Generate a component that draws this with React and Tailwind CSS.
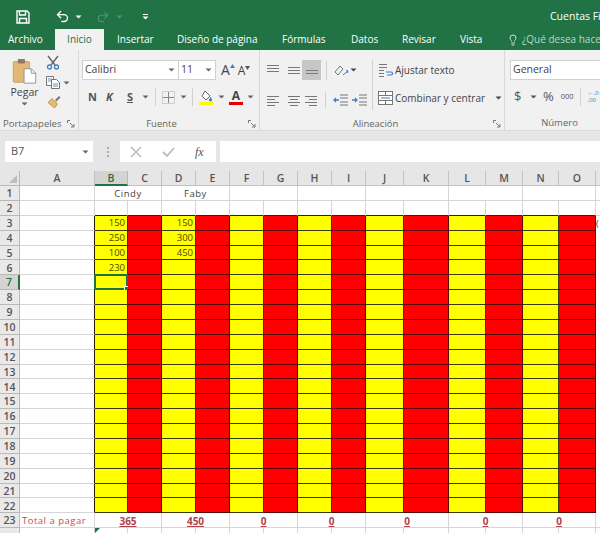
import React from 'react';
import { Undo2, Redo2, Lightbulb } from 'lucide-react';

const Caret = ({ className = 'text-[#666]' }) => (
  <svg width="7" height="4" viewBox="0 0 7 4" className={`shrink-0 ${className}`}>
    <path d="M0.5 0.5h6L3.5 3.5z" fill="currentColor" />
  </svg>
);

const Sep = ({ className = 'h-[19px]' }) => <div className={`w-px bg-[#d0d0d0] shrink-0 ${className}`} />;

const Launcher = () => (
  <svg width="8" height="8" viewBox="0 0 8 8" className="shrink-0 text-[#777]">
    <path d="M0.5 3V0.5H3M3 3l3.5 3.5M7 4v3H4" fill="none" stroke="currentColor" strokeWidth="1" />
  </svg>
);

// lines for the alignment buttons
const Lines = ({ rows }) => (
  <svg width="14" height="12" viewBox="0 0 14 12" className="shrink-0">
    {rows.map(([x1, x2, y], i) => (
      <path key={i} d={`M${x1} ${y}H${x2}`} stroke="#777" strokeWidth="1" />
    ))}
  </svg>
);

const Save = () => (
  <svg width="14" height="14" viewBox="0 0 14 14" fill="none" stroke="#fff" strokeWidth="1.4">
    <path d="M1 1h10l2 2v10H1z" />
    <path d="M3.5 1v4h6V1M3.5 13V8.5h7V13" />
  </svg>
);

const Paste = () => (
  <svg width="25" height="26" viewBox="0 0 27 29">
    <rect x="1" y="4" width="18" height="23" rx="1" fill="#e3b877" stroke="#c79a5b" />
    <rect x="6" y="1" width="8" height="5" rx="1" fill="#8a7a6a" />
    <path d="M13 12h8l5 5v11H13z" fill="#fff" stroke="#8d8d8d" />
    <path d="M21 12v5h5" fill="none" stroke="#8d8d8d" />
  </svg>
);

const Scissors = () => (
  <svg width="14" height="15" viewBox="0 0 14 15" fill="none">
    <path d="M2 1l7 9M12 1L5 10" stroke="#666" strokeWidth="1.4" />
    <circle cx="3.5" cy="12" r="2" stroke="#3f7fc1" strokeWidth="1.3" />
    <circle cx="10.5" cy="12" r="2" stroke="#3f7fc1" strokeWidth="1.3" />
  </svg>
);

const Copy = () => (
  <svg width="14" height="13" viewBox="0 0 14 13" fill="#fff" stroke="#777">
    <path d="M0.5 0.5h7v9h-7z" />
    <path d="M5.5 3.5h5l3 3v6h-8z" />
    <path d="M2 3h4M2 5h3M7 8h5M7 10h5" stroke="#6b93bd" />
  </svg>
);

const Brush = () => (
  <svg width="15" height="14" viewBox="0 0 15 14">
    <path d="M9 5l4-4 1.5 1.5-4 4z" fill="#777" />
    <path d="M6 3.5l5.5 5.5-3 4L2 7.5z" fill="#e6b96f" stroke="#c69a55" />
  </svg>
);

const BigA = ({ size, mark }) => (
  <span className="flex items-start text-[#444] leading-none">
    <span style={{ fontSize: size }}>A</span>
    <svg width="5" height="4" viewBox="0 0 5 4" className="mt-px">
      <path d={mark === 'up' ? 'M0 4l2.5-4L5 4z' : 'M0 0l2.5 4L5 0z'} fill={mark === 'up' ? '#4a7ebb' : '#555'} />
    </svg>
  </span>
);

const Borders = () => (
  <svg width="13" height="13" viewBox="0 0 13 13" fill="none" className="shrink-0">
    <rect x="0.5" y="0.5" width="12" height="12" stroke="#aaa" strokeDasharray="1 1" />
    <path d="M6.5 1v11M1 6.5h11" stroke="#888" />
  </svg>
);

const Fill = () => (
  <svg width="15" height="15" viewBox="0 0 15 15" className="shrink-0">
    <path d="M6 1l5 5-4 4-4-4z" fill="#fff" stroke="#666" />
    <path d="M11.5 7c1 1.5 1.5 2 1.5 3a1.4 1.4 0 0 1-3 0c0-1 .5-1.5 1.5-3z" fill="#3f7fc1" />
    <rect x="0" y="12" width="14" height="3" fill="#ffff00" />
  </svg>
);

const FontColor = () => (
  <span className="flex flex-col items-center leading-none w-[14px]">
    <span className="text-[12px] font-bold text-[#444] leading-[11px]">A</span>
    <span className="w-[14px] h-[3px] bg-[#e00000] mt-px" />
  </span>
);

const Orient = () => (
  <svg width="15" height="13" viewBox="0 0 15 13" fill="none" className="shrink-0">
    <path d="M1 8l5-6 3 3-5 6z" stroke="#777" />
    <path d="M9 11l5-4M12 6.5l2 .5-.5 2" stroke="#3f7fc1" />
  </svg>
);

const Indent = ({ right }) => (
  <svg width="15" height="12" viewBox="0 0 15 12" fill="none" className="shrink-0">
    <path d="M7 1h8M7 4h8M7 8h8M7 11h8" stroke="#777" />
    <path d={right ? 'M0 6h5M3 4l2 2-2 2' : 'M6 6H1M3 4L1 6l2 2'} stroke="#3f7fc1" strokeWidth="1.3" />
  </svg>
);

const Wrap = () => (
  <svg width="15" height="15" viewBox="0 0 15 15" fill="none" className="shrink-0">
    <path d="M1 1.5h8M1 4.5h8M1 7.5h5M1 10.5h5M1 13.5h5" stroke="#777" />
    <path d="M8 9h5a1.5 1.5 0 0 1 0 3H9" stroke="#3f7fc1" strokeWidth="1.2" />
  </svg>
);

const Merge = () => (
  <svg width="15" height="14" viewBox="0 0 15 14" fill="#fff" stroke="#777" className="shrink-0">
    <rect x="0.5" y="0.5" width="14" height="13" />
    <path d="M0.5 4.5h14M0.5 9.5h14M7.5 0.5v4M7.5 9.5v4" />
    <path d="M3 7h9" stroke="#3f7fc1" />
  </svg>
);

const COLUMNS = ['B', 'C', 'D', 'E', 'F', 'G', 'H', 'I', 'J', 'K', 'L', 'M', 'N', 'O'];
const VALUES = {
  3: { B: 150, D: 150 },
  4: { B: 250, D: 300 },
  5: { B: 100, D: 450 },
  6: { B: 230 },
};
const PAIRS = [
  ['Cindy', 365],
  ['Faby', 450],
  ['', 0],
  ['', 0],
  ['', 0],
  ['', 0],
  ['', 0],
];

const RowHead = ({ n }) => (
  <div
    className={`flex items-center justify-center pt-px border-b border-r text-[10.5px] leading-none font-semibold ${
      n === 7
        ? 'bg-[#d3d3d3] border-r-[#217346] border-r-2 border-b-[#b5b5b5] text-[#217346]'
        : 'bg-[#e9e9e9] border-[#b9b9b9] text-[#555]'
    }`}
  >
    {n}
  </div>
);

const PlainRow = ({ n, merged, lineDark }) => {
  const border = lineDark ? 'border-b-[#3a2200]' : 'border-b-[#d6d6d6]';
  return (
    <>
      <RowHead n={n} />
      <div className="border-r border-b border-[#d6d6d6]" />
      {merged
        ? PAIRS.map(([label], i) => (
            <div key={i} className="col-span-2 flex items-center justify-center pt-[2px] border-r border-b border-[#d6d6d6] text-[9.5px] leading-none tracking-[0.5px] text-[#444]">
              {label}
            </div>
          ))
        : COLUMNS.map((c) => <div key={c} className={`border-r border-b border-r-[#d6d6d6] ${border}`} />)}
      <div className="border-b border-[#d6d6d6]" />
    </>
  );
};

const ColorRow = ({ n }) => (
  <>
    <RowHead n={n} />
    <div className="border-r border-b border-r-[#2a1a00] border-b-[#d6d6d6]" />
    {COLUMNS.map((c, i) => (
      <div
        key={c}
        className={`relative flex items-center justify-end pt-px pr-[2px] border-r border-b text-[9.5px] leading-none text-[#4a4a00] ${
          i % 2 === 0 ? 'bg-[#ffff00] border-[#3a3a00]' : 'bg-[#ff0000] border-[#5a0000]'
        }`}
      >
        {VALUES[n]?.[c]}
        {n === 7 && c === 'B' && (
          <span className="absolute left-[-1px] top-[-1px] right-[-1px] bottom-[-1px] border-2 border-[#217346]">
            <span className="absolute right-[-3px] bottom-[-3px] w-[5px] h-[5px] bg-[#217346] border border-white" />
          </span>
        )}
      </div>
    ))}
    <div className="flex items-center text-[9px] leading-none text-[#333] overflow-hidden">
      {n === 3 ? '(' : ''}
    </div>
  </>
);

const TotalRow = () => (
  <>
    <RowHead n={23} />
    <div className="flex items-center pt-[2px] pl-[2px] border-r border-b border-[#d6d6d6] text-[9.5px] leading-none tracking-[0.5px] text-[#c0504d] whitespace-nowrap">
      Total a pagar
    </div>
    {PAIRS.map(([, total], i) => (
      <div key={i} className="col-span-2 flex items-center justify-center pt-[2px] border-r border-b border-[#d6d6d6] text-[10px] leading-none font-bold underline text-[#b0404a]">
        {total}
      </div>
    ))}
    <div className="border-b border-[#d6d6d6]" />
  </>
);

const App = () => {
  const rows = Array.from({ length: 20 }, (_, i) => i + 3);

  return (
    <div className="w-[600px] h-[533px] overflow-hidden bg-white font-['Open_Sans',sans-serif] text-[#444]">
      {/* title bar */}
      <div className="h-[29px] bg-[#217346] flex items-center text-white pt-1">
        <div className="ml-4"><Save /></div>
        <Undo2 size={15} strokeWidth={2.2} className="ml-[25px]" />
        <Caret className="ml-[5px] text-white" />
        <Redo2 size={14} className="ml-[14px] text-[#4f9470]" />
        <Caret className="ml-[6px] text-[#4f9470]" />
        <div className="ml-[19px] flex flex-col items-center gap-px">
          <span className="w-[5px] h-px bg-white" />
          <Caret className="text-white" />
        </div>
        <div className="ml-auto w-[50px] overflow-hidden whitespace-nowrap text-[10.5px] text-white">Cuentas Fi</div>
      </div>

      {/* tabs */}
      <div className="h-[21px] bg-[#217346] flex items-center text-[10px] text-white whitespace-nowrap overflow-hidden">
        <span className="ml-2 w-[47px] shrink-0">Archivo</span>
        <span className="w-[49px] shrink-0 h-full bg-[#f1f1f1] text-[#217346] flex items-center justify-center">Inicio</span>
        <span className="ml-[13px] w-[60px] shrink-0">Insertar</span>
        <span className="w-[105px] shrink-0">Diseño de página</span>
        <span className="w-[69px] shrink-0">Fórmulas</span>
        <span className="w-[51px] shrink-0">Datos</span>
        <span className="w-[58px] shrink-0">Revisar</span>
        <span className="w-[47px] shrink-0">Vista</span>
        <Lightbulb size={12} className="text-[#cfe3d8] shrink-0" />
        <span className="ml-[3px] shrink-0 text-[#b9d6c6]">¿Qué desea hace</span>
      </div>

      {/* ribbon */}
      <div className="h-[81px] bg-[#f1f1f1] flex text-[10.5px] border-b border-[#dcdcdc] whitespace-nowrap">
        {/* Portapapeles */}
        <div className="w-[79px] shrink-0 border-r border-[#d8d8d8] flex flex-col">
          <div className="flex h-[68px]">
            <div className="w-[46px] flex flex-col items-center pt-[8px] pl-[3px]">
              <Paste />
              <span className="mt-[2px] leading-[12px] text-[#444]">Pegar</span>
              <Caret className="mt-[4px] text-[#666]" />
            </div>
            <div className="flex flex-col items-start pt-[5px] gap-[6px]">
              <Scissors />
              <div className="flex items-center gap-[3px]"><Copy /><Caret /></div>
              <Brush />
            </div>
          </div>
          <div className="flex items-center justify-between h-[12px] px-[3px] text-[9.5px] leading-none text-[#666]">
            <span>Portapapeles</span>
            <Launcher />
          </div>
        </div>

        {/* Fuente */}
        <div className="w-[181px] shrink-0 border-r border-[#d8d8d8] flex flex-col">
          <div className="h-[68px] flex flex-col pl-[3px] pt-[10px]">
            <div className="flex items-center h-[20px]">
              <div className="w-[97px] h-full bg-white border border-[#d0d0d0] flex items-center justify-between pl-[2px] pr-[3px]">
                Calibri <Caret />
              </div>
              <div className="w-[37px] h-full bg-white border border-l-0 border-[#d0d0d0] flex items-center justify-between pl-[2px] pr-[3px]">
                11 <Caret />
              </div>
              <div className="ml-[5px] flex items-end gap-[3px]">
                <BigA size={14} mark="up" />
                <BigA size={12} mark="down" />
              </div>
            </div>
            <div className="flex items-center h-[18px] mt-[8px] text-[11px] font-bold text-[#555]">
              <span className="ml-[6px] w-[18px] shrink-0">N</span>
              <span className="w-[21px] shrink-0 italic">K</span>
              <span className="w-[15px] shrink-0 underline">S</span>
              <Caret />
              <Sep className="h-[18px] ml-[6px]" />
              <span className="ml-[6px]"><Borders /></span>
              <Caret className="ml-[5px] text-[#666]" />
              <Sep className="h-[18px] ml-[5px]" />
              <span className="ml-[6px]"><Fill /></span>
              <Caret className="ml-[4px] text-[#666]" />
              <span className="ml-[4px]"><FontColor /></span>
              <Caret className="ml-[4px] text-[#666]" />
            </div>
          </div>
          <div className="flex items-center h-[12px] px-[3px] text-[9.5px] leading-none text-[#666]">
            <span className="flex-1 text-center pr-[7px]">Fuente</span>
            <Launcher />
          </div>
        </div>

        {/* Alineación */}
        <div className="w-[245px] shrink-0 border-r border-[#d8d8d8] flex flex-col">
          <div className="h-[68px] flex pl-[6px] pt-[8px]">
            <div className="w-[106px] shrink-0 flex flex-col gap-[12px] pt-[2px]">
              <div className="flex items-center gap-[7px] h-[20px]">
                <Lines rows={[[1, 13, 1.5], [1, 13, 4.5], [1, 13, 7.5]]} />
                <Lines rows={[[1, 13, 3.5], [1, 13, 6.5], [1, 13, 9.5]]} />
                <span className="w-[19px] h-[20px] bg-[#c6c6c6] flex items-center justify-center -ml-[6px]">
                  <Lines rows={[[1, 13, 6.5], [1, 13, 9.5]]} />
                </span>
                <Sep className="h-[19px] -ml-[2px]" />
                <Orient />
                <Caret className="-ml-[6px]" />
              </div>
              <div className="flex items-center gap-[7px] h-[16px]">
                <Lines rows={[[1, 13, 2.5], [1, 9, 5.5], [1, 13, 8.5], [1, 9, 11.5]]} />
                <Lines rows={[[1, 13, 2.5], [3, 11, 5.5], [1, 13, 8.5], [3, 11, 11.5]]} />
                <span className="-ml-[4px]"><Lines rows={[[1, 13, 2.5], [5, 13, 5.5], [1, 13, 8.5], [5, 13, 11.5]]} /></span>
                <Sep className="h-[16px]" />
                <Indent />
                <span className="-ml-[3px]"><Indent right /></span>
              </div>
            </div>
            <Sep className="h-[50px] mt-[2px]" />
            <div className="flex flex-col pl-[5px] pt-[1px] text-[10px] text-[#444]">
              <div className="flex items-center h-[22px] gap-[2px]"><Wrap /> Ajustar texto</div>
              <div className="flex items-center h-[22px] gap-[2px] mt-[6px]">
                <Merge /> Combinar y centrar
                <Caret className="ml-[8px]" />
              </div>
            </div>
          </div>
          <div className="flex items-center h-[12px] px-[3px] text-[9.5px] leading-none text-[#666]">
            <span className="flex-1 text-center pr-[5px]">Alineación</span>
            <Launcher />
          </div>
        </div>

        {/* Número */}
        <div className="flex-1 flex flex-col min-w-0">
          <div className="h-[68px] flex flex-col pl-[5px] pt-[10px]">
            <div className="h-[20px] bg-white border border-r-0 border-[#d0d0d0] flex items-center pl-[2px] text-[#444]">General</div>
            <div className="flex items-center h-[18px] mt-[8px] text-[#555]">
              <span className="text-[13px] ml-[4px] w-[8px] shrink-0">$</span>
              <Caret className="ml-[8px]" />
              <span className="text-[13px] ml-[6px] shrink-0">%</span>
              <span className="text-[7.5px] ml-[7px] shrink-0">000</span>
              <Sep className="h-[18px] ml-[6px]" />
              <span className="flex flex-col text-[6px] leading-[7px] text-[#3f7fc1] ml-[7px] shrink-0">
                <span>←,0</span>
                <span>,00</span>
              </span>
            </div>
          </div>
          <div className="h-[12px] text-center pl-[14px] text-[9.5px] leading-none text-[#666]">Número</div>
        </div>
      </div>

      {/* formula bar */}
      <div className="h-[40px] bg-[#e6e6e6] flex items-start pt-[10px]">
        <div className="ml-[5px] w-[88px] h-[21px] bg-white flex items-center justify-between pl-[6px] pr-[4px] text-[11px] text-[#555]">
          B7 <Caret />
        </div>
        <div className="ml-[14px] w-[3px] h-[10px] mt-[6px] border-l-2 border-dotted border-[#aaa]" />
        <div className="ml-[10px] w-[96px] h-[21px] bg-white flex items-center text-[#bbb]">
          <svg width="12" height="12" viewBox="0 0 12 12" className="ml-[10px]" fill="none" stroke="#bbb" strokeWidth="1.5">
            <path d="M1 1l10 10M11 1L1 11" />
          </svg>
          <svg width="13" height="12" viewBox="0 0 13 12" className="ml-[20px]" fill="none" stroke="#bbb" strokeWidth="1.8">
            <path d="M1 6l4 4 7-8" />
          </svg>
          <span className="ml-[20px] font-['Liberation_Serif',serif] italic text-[12px] text-[#555]">fx</span>
        </div>
        <div className="ml-[4px] flex-1 h-[21px] bg-white" />
      </div>

      {/* sheet */}
      <div className="grid grid-cols-[20px_75px_33px_34px_34px_34px_34px_34px_34px_34px_38px_45px_37px_37px_36px_37px_4px] grid-rows-[15px] auto-rows-[14.88px]">
        <div className="bg-[#e6e6e6] border-b border-r border-[#b9b9b9] flex items-end justify-end p-[2px]">
          <svg width="8" height="8" viewBox="0 0 8 8"><path d="M8 0v8H0z" fill="#bdbdbd" /></svg>
        </div>
        {['A', ...COLUMNS].map((c) => (
          <div
            key={c}
            className={`flex items-center justify-center pt-px border-r border-b text-[10.5px] leading-none font-semibold ${
              c === 'B'
                ? 'bg-[#d3d3d3] border-b-2 border-b-[#217346] border-r-[#b9b9b9] text-[#217346]'
                : 'bg-[#e6e6e6] border-[#c3c3c3] text-[#555]'
            }`}
          >
            {c}
          </div>
        ))}
        <div className="bg-[#e6e6e6] border-b border-[#c3c3c3]" />

        <PlainRow n={1} merged />
        <PlainRow n={2} lineDark />
        {rows.map((n) => <ColorRow key={n} n={n} />)}
        <TotalRow />

        <RowHead />
        <div className="border-r border-[#d6d6d6]" />
        {COLUMNS.map((c) => (
          <div key={c} className="relative border-r border-[#d6d6d6]">
            {c === 'B' && (
              <svg width="5" height="5" viewBox="0 0 5 5" className="absolute left-0 top-0">
                <path d="M0 0h5L0 5z" fill="#217346" />
              </svg>
            )}
          </div>
        ))}
        <div />
      </div>
    </div>
  );
};

export default App;
